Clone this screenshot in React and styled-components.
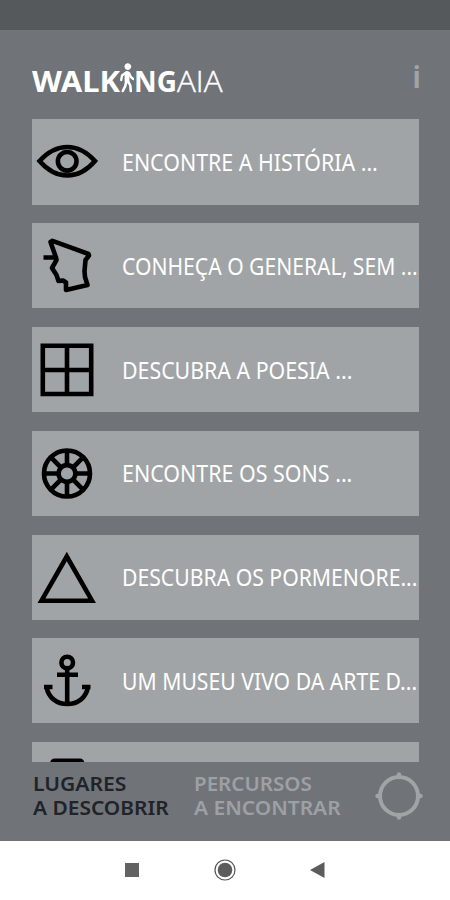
import { useLayoutEffect, useRef, useState } from 'react'
import styled, { createGlobalStyle } from 'styled-components'

const places = [
  { icon: 'eye', title: 'ENCONTRE A HISTÓRIA ...', width: 255.5 },
  { icon: 'general', title: 'CONHEÇA O GENERAL, SEM ...', width: 295.5 },
  { icon: 'window', title: 'DESCUBRA A POESIA ...', width: 230 },
  { icon: 'wheel', title: 'ENCONTRE OS SONS ...', width: 230 },
  { icon: 'triangle', title: 'DESCUBRA OS PORMENORE...', width: 295.5 },
  { icon: 'anchor', title: 'UM MUSEU VIVO DA ARTE D...', width: 295.5 },
  { icon: 'box', title: '', width: 0 },
]

// Squeezes or stretches a line of text to a given width
const FitText = ({ width, children }) => {
  const ref = useRef(null)
  const [scale, setScale] = useState(1)

  useLayoutEffect(() => {
    const natural = ref.current.offsetWidth
    if (natural) setScale(width / natural)
  }, [width, children])

  return (
    <Fit $width={width}>
      <span ref={ref} style={{ transform: `scaleX(${scale})` }}>{children}</span>
    </Fit>
  )
}

const icons = {
  eye: (
    <>
      <path d='M7.500 42Q20.500 28 35.300 28T63 42Q50.500 56.500 35.300 56.500T7.500 42Z' />
      <circle cx='35.200' cy='42.300' r='9.300' />
    </>
  ),
  general: (
    <path
      d='M11.500 34.500H24L18.500 19L20.500 17.800L56.500 31L57 32.500L53.500 37L52.500 48L53 54L55.500 62L34 67V59.500L31 57.500L26.500 58L24.500 52L20 45L24.500 37L24 34.500'
      strokeLinejoin='round'
    />
  ),
  window: <path d='M10.800 18.800H59.200V67H10.800ZM35 19V67M11 43H59' />,
  wheel: (
    <>
      <circle cx='35' cy='42.500' r='23' />
      <circle cx='35' cy='42.500' r='8.400' />
      <path d='M35 19.500V34.500M35 50.500V65.500M12 42.500H27M43 42.500H58M18.700 26.200L29 36.500M41 48.500L51.300 58.800M51.300 26.200L41 36.500M29 48.500L18.700 58.800' />
    </>
  ),
  triangle: <path d='M34.800 21.500L9.500 65.700H60Z' />,
  anchor: (
    <>
      <circle cx='35.200' cy='24.500' r='5.800' />
      <path d='M35.200 30V66M25 36.800H46' />
      <path d='M12 49H20.500M50 49H58.500M14.500 49C16.500 60 25 66 35.300 66S54 60 56 49' />
    </>
  ),
  box: <rect x='20.500' y='18.800' width='29.500' height='40' rx='2' />,
}

const Walker = () => (
  <WalkerIcon viewBox='0 0 14 30'>
    <circle cx='7.800' cy='3.600' r='2.900' fill='#fff' />
    <path d='M5.500 10L2 12.500L1.200 17M9 10L10.800 14L13.300 16' strokeWidth='2.300' />
    <path d='M7 10.500V18' strokeWidth='4.800' />
    <path d='M6.300 18L5.300 23L2.800 28M8 18L10.300 22.500L10.800 28' strokeWidth='2.600' />
  </WalkerIcon>
)

const App = () => {
  return (
    <Screen>
      <GlobalStyle />
      <StatusBar />
      <Header>
        <Logo>
          <LogoBold><FitText width={88}>WALK</FitText></LogoBold>
          <Walker />
          <LogoBold><FitText width={43}>NG</FitText></LogoBold>
          <LogoLight><FitText width={45}>AIA</FitText></LogoLight>
        </Logo>
        <Info>i</Info>
      </Header>

      <List>
        {places.map((place) => (
          <Card key={place.icon}>
            <CardIcon viewBox='0 0 70 85'>{icons[place.icon]}</CardIcon>
            <CardTitle><FitText width={place.width}>{place.title}</FitText></CardTitle>
          </Card>
        ))}
      </List>

      <Footer>
        <Tab $active $width='161px'>
          <FitText width={93}>LUGARES</FitText>
          <FitText width={136}>A DESCOBRIR</FitText>
        </Tab>
        <Tab $width='182px'>
          <FitText width={118}>PERCURSOS</FitText>
          <FitText width={147}>A ENCONTRAR</FitText>
        </Tab>
        <TargetIcon viewBox='0 0 48 48'>
          <circle cx='24' cy='24' r='19' />
          <path d='M24 2.500V5M24 43V45.500M2.500 24H5M43 24H45.500' strokeWidth='4.500' strokeLinecap='round' />
        </TargetIcon>
      </Footer>

      <SystemBar>
        <svg width='24' height='24' viewBox='0 0 24 24'>
          <rect x='5' y='5' width='14' height='14' fill='#626262' />
        </svg>
        <svg width='24' height='24' viewBox='0 0 24 24'>
          <circle cx='12' cy='12' r='10' fill='none' stroke='#555' strokeWidth='1.200' />
          <circle cx='12' cy='12' r='7.300' fill='#5c5c5c' />
        </svg>
        <svg width='24' height='24' viewBox='0 0 24 24'>
          <path d='M4 12L18.500 4V20Z' fill='#5c5c5c' />
        </svg>
      </SystemBar>
    </Screen>
  )
}

export default App


const GlobalStyle = createGlobalStyle`
* {
    box-sizing: border-box;
}

body {
    margin: 0;
    font-family: 'Noto Sans', 'Open Sans', sans-serif;
}
`;

const Screen = styled.div`
    display: flex;
    flex-direction: column;
    width: 450px;
    height: 900px;
    overflow: hidden;
    background-color: #707378;
`;

const StatusBar = styled.div`
    height: 30px;
    flex-shrink: 0;
    background-color: #55595b;
`;

const Header = styled.header`
    display: flex;
    justify-content: space-between;
    height: 89.4px;
    flex-shrink: 0;
    padding: 31px 29px 0 32px;
`;

const Logo = styled.div`
    display: flex;
    height: 40px;
    line-height: 40px;
    font-size: 28.5px;
    color: #fff;
`;

const LogoBold = styled.span`
    font-weight: 700;
`;

const LogoLight = styled.span`
    font-family: 'Open Sans', 'Noto Sans', sans-serif;
    font-weight: 300;
    -webkit-text-stroke: 0.4px #fff;
`;

const WalkerIcon = styled.svg`
    width: 14px;
    height: 30px;
    margin-top: 2px;
    fill: none;
    stroke: #fff;
    stroke-linecap: round;
`;

const Info = styled.span`
    font-size: 31px;
    font-weight: 600;
    line-height: 30px;
    color: #a0a3a7;
`;

const Fit = styled.span`
    display: block;
    width: ${(props) => props.$width}px;
    white-space: nowrap;

    span {
        display: inline-block;
        transform-origin: 0 50%;
    }
`;

const List = styled.main`
    display: flex;
    flex-direction: column;
    gap: 18.6px;
    height: 642.2px;
    flex-shrink: 0;
    padding: 0 31.5px 0 32px;
    overflow: hidden;
`;

const Card = styled.div`
    display: flex;
    align-items: center;
    height: 85.2px;
    flex-shrink: 0;
    background-color: #a0a4a6;
`;

const CardIcon = styled.svg`
    width: 70px;
    height: 85px;
    flex-shrink: 0;
    fill: none;
    stroke: #000;
    stroke-width: 4.6;
`;

const CardTitle = styled.div`
    margin-left: 19.5px;
    font-size: 23px;
    line-height: 32px;
    color: #fff;
`;

const Footer = styled.footer`
    display: flex;
    height: 79px;
    flex-shrink: 0;
    padding: 10px 0 0 32px;
`;

const Tab = styled.div`
    width: ${(props) => props.$width};
    padding-left: 0.5px;
    font-size: 19.5px;
    font-weight: 600;
    line-height: 24px;
    color: ${(props) => (props.$active ? '#202328' : '#9da1a5')};
`;

const TargetIcon = styled.svg`
    width: 48px;
    height: 48px;
    fill: none;
    stroke: #a0a4a6;
    stroke-width: 4;
`;

const SystemBar = styled.nav`
    display: flex;
    justify-content: center;
    align-items: center;
    gap: 69px;
    flex: 1;
    background-color: #fff;
`;
